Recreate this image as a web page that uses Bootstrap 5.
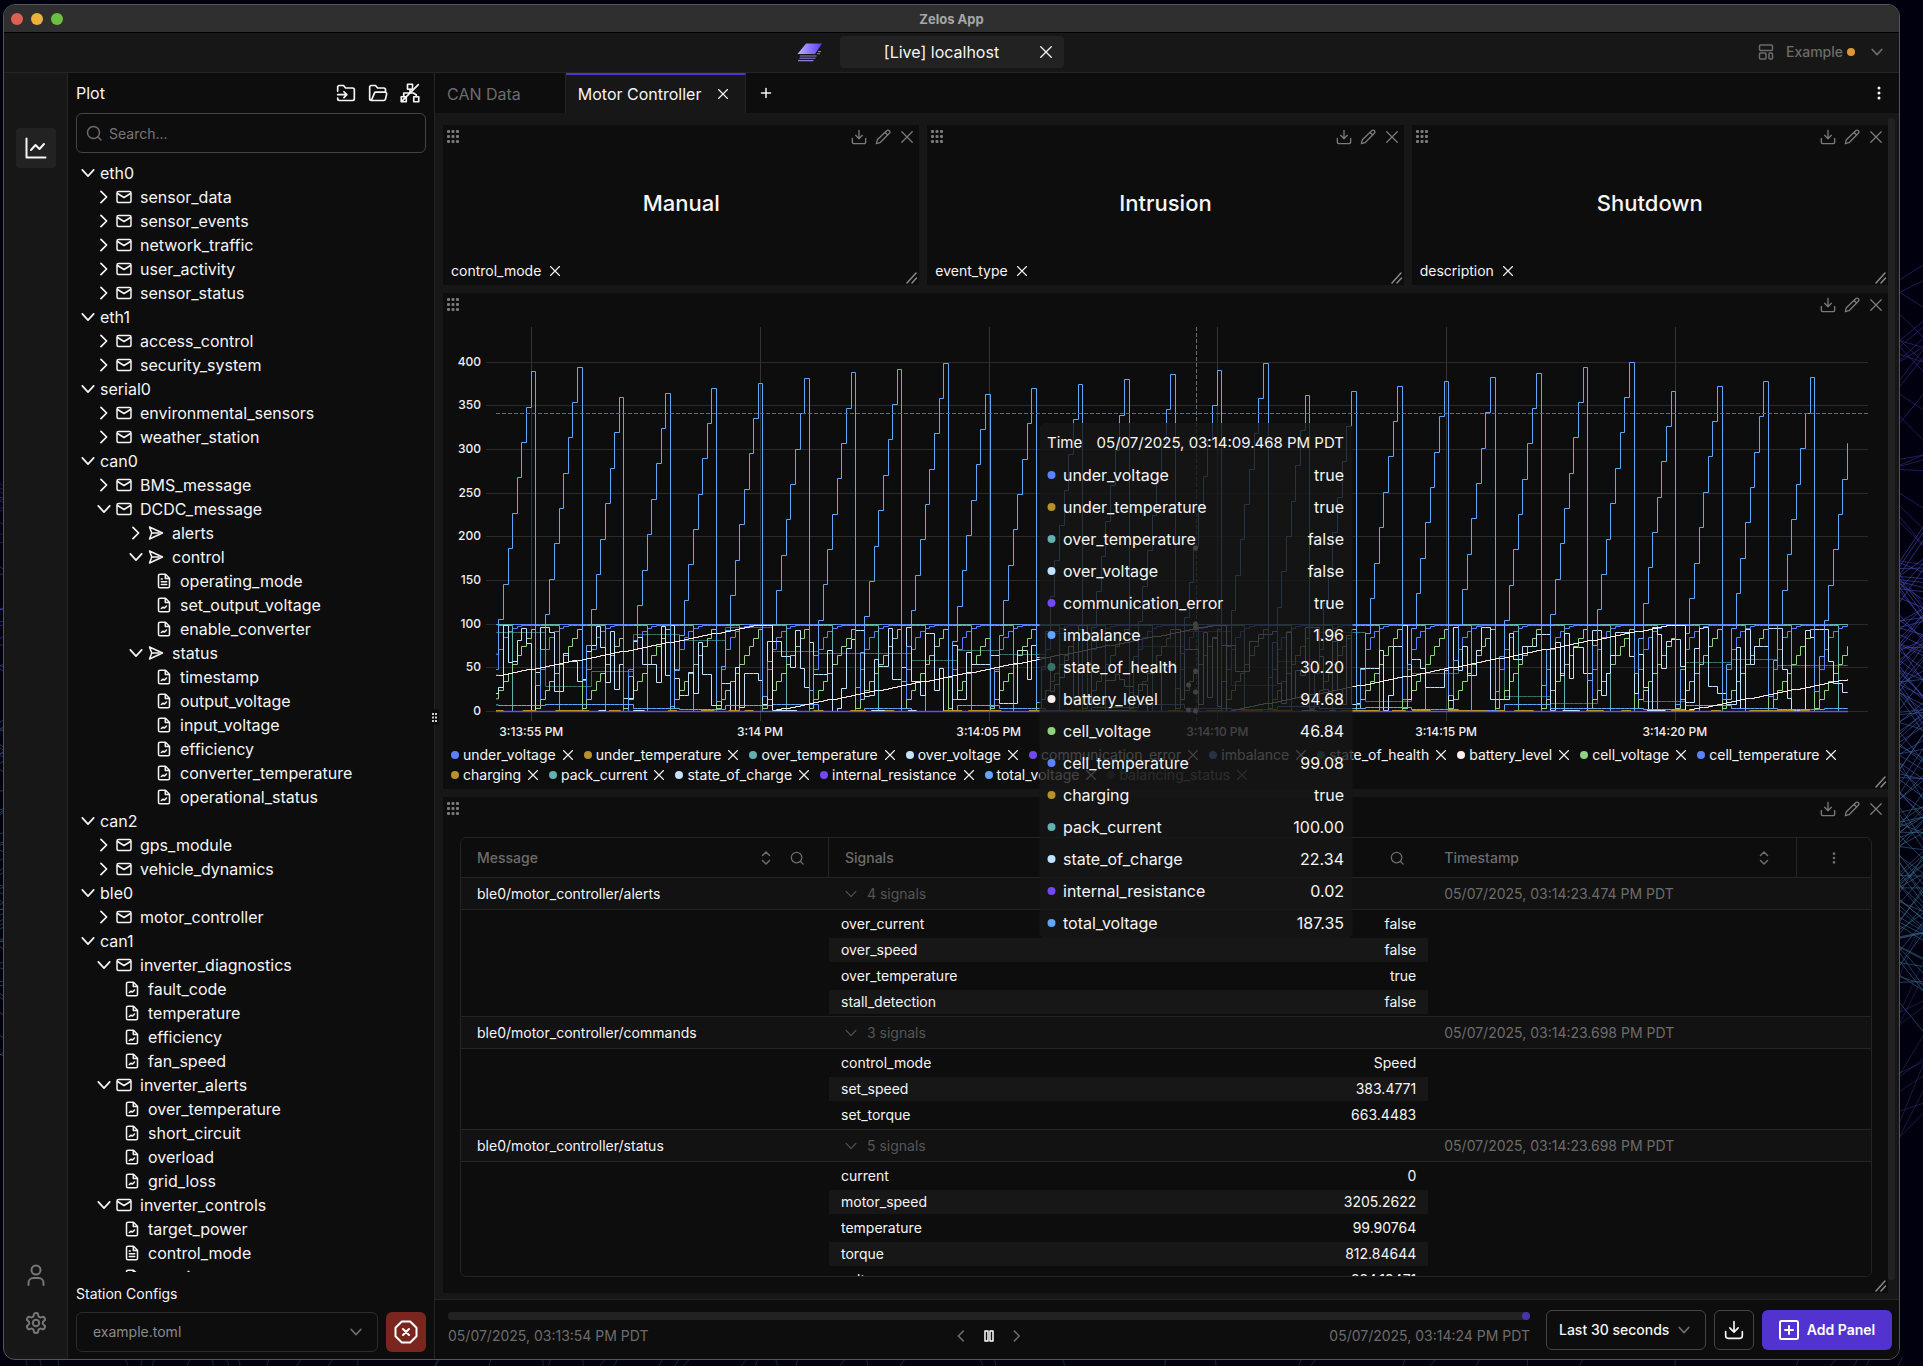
<!DOCTYPE html>
<html lang="en" data-bs-theme="dark">
<head>
<meta charset="utf-8">
<meta name="viewport" content="width=device-width, initial-scale=1">
<title>Zelos App</title>
<link rel="stylesheet" href="https://cdn.jsdelivr.net/npm/bootstrap@5.3.0/dist/css/bootstrap.min.css">
<style>
:root { --ink:#f5f5f5; --muted:#6c6c6c; --line:#242424; --surface:#0d0d0d; --frame:#171717; --raised:#222; --accent:#5233cf; }
body { background:#00000f; color:var(--ink); font-family:Inter,"Liberation Sans",sans-serif; font-size:16px; line-height:24px; height:100vh; padding:4px 23px 6px 3px; overflow:hidden; }
svg.ico { fill:none; stroke:currentColor; stroke-width:2; stroke-linecap:round; stroke-linejoin:round; display:block; flex:none; }
.i12 { width:12px; height:12px; } .i14 { width:14px; height:14px; } .i16 { width:16px; height:16px; } .i18 { width:18px; height:18px; } .i20 { width:20px; height:20px; } .i24 { width:24px; height:24px; }
svg.thin { stroke-width:1.5; }
.t14 { font-size:14px; }
.icon-btn { background:none; border:0; padding:0; color:inherit; display:flex; align-items:center; justify-content:center; }
.dim { color:var(--muted); }
.backdrop-net { position:fixed; inset:0; width:100%; height:100%; z-index:-1; }
.app-window { border:1px solid #555; border-radius:12px; background:var(--frame); }
.title-strip { height:28px; background:#2f2f2f; border-bottom:1px solid #000; display:grid; grid-template-columns:1fr auto 1fr; align-items:center; padding:0 7px; }
.title-strip h1 { font-size:13px; line-height:20px; font-weight:700; color:#a6a6a6; }
.light { width:12px; height:12px; border-radius:50%; }
.top-strip { height:40px; padding-bottom:1px; border-bottom:1px solid var(--line); display:grid; grid-template-columns:1fr 224px 1fr; align-items:center; }
.session-tab { height:32px; background:var(--raised); border-radius:4px; display:grid; grid-template-columns:16px 1fr 36px; align-items:center; text-align:center; }
.rail { width:64px; flex:none; border-right:1px solid var(--line); padding:55px 0 16px; }
.rail .icon-btn { width:40px; height:40px; border-radius:4px; color:#777; }
.rail .icon-btn.current { background:var(--raised); color:var(--ink); }
.side { width:367px; background:var(--surface); border-right:1px solid var(--line); padding:0 8px 7px; }
.side-head { height:40px; }
.field { height:40px; border-radius:6px; border:1px solid #444; background:transparent; color:var(--ink); font-size:14px; width:100%; }
.search-field { padding:0 12px 0 32px; }
.search-field::placeholder { color:#777; opacity:1; }
.over-left { position:absolute; left:10px; top:12px; pointer-events:none; }
.over-right { position:absolute; right:16px; top:14px; pointer-events:none; }
.pick { appearance:none; padding:0 16px; }
.pick.soft { border-color:#2b2b2b; color:#8a8a8a; }
.pick.range { width:160px; padding:0 12px; }
.stop-btn { width:40px; height:40px; background:#7a251e; border-radius:6px; color:#fff; }
.tree { flex:1 1 0; min-height:0; overflow:hidden; margin-top:8px; }
.tree ul { list-style:none; margin:0; padding:0; }
.tree li { height:24px; display:flex; align-items:center; white-space:nowrap; }
.tree .lv1 { padding-left:16px; } .tree .lv2 { padding-left:48px; } .tree .lv3 { padding-left:80px; }
.twist { width:24px; display:flex; justify-content:center; }
.tree .name { margin-left:8px; } .tree .lv0 .name { margin-left:0; }
.station-label { height:40px; padding-top:10px; line-height:24px; font-size:14px; }
.grip { position:absolute; right:-5px; top:636px; width:9px; height:16px; background:var(--surface); color:#ccc; z-index:2; }
.tabs { height:40px; background:var(--surface); }
.page-tab { height:40px; padding:0 12px; border:0; border-right:1px solid var(--line); background:none; color:var(--muted); display:flex; align-items:center; gap:12px; border-top:2px solid transparent; }
.page-tab.current { background:var(--frame); color:var(--ink); border-top-color:var(--accent); }
.slot { width:20px; display:flex; justify-content:center; }
.deck { padding:12px 4px 6px 8px; min-height:0; }
.scroll-rail { width:7px; margin:-7px 0 13px; background:var(--raised); border-radius:4px; flex:none; }
.panel { background:var(--surface); position:relative; min-height:0; min-width:0; }
.panel-head { height:24px; color:#7a7a7a; padding-left:3px; flex:none; }
.panel-head .icon-btn { width:24px; height:24px; } .panel-head .drag { width:14px; }
.stat-row { height:160px; gap:8px; }
.stat-value { font-size:22px; line-height:32px; font-weight:500; }
.stat-foot { height:28px; padding:0 8px; font-size:14px; flex:none; }
.resize { position:absolute; right:1px; bottom:1px; color:#888; }
.plot { display:block; width:100%; height:428px; flex:none; }
.plot text { fill:#f0f0f0; font-size:12px; font-weight:500; }
.keys { padding:0 8px; font-size:14px; line-height:20px; }
.key-item { display:flex; align-items:center; height:20px; margin-right:8px; }
.dot { width:8px; height:8px; border-radius:50%; flex:none; }
.key-item .dot { margin-right:4px; }
.key-item .icon-btn { width:16px; margin-left:4px; }
.key-item.off { opacity:.5; }
.hover-card { position:absolute; top:130px; width:313px; transform:translateX(-50%); background:rgba(23,23,23,.8); border-radius:6px; padding:4px 8px 0; z-index:5; }
.hc-row { height:32px; display:flex; align-items:center; white-space:nowrap; }
.hc-row.hc-time { font-size:15px; }
.sheet-wrap { margin:16px 16px 16px 17px; border:1px solid var(--line); border-radius:6px; overflow:hidden; font-size:14px; line-height:20px; flex:1 1 0; min-height:0; }
.sheet { width:100%; table-layout:fixed; border-collapse:separate; border-spacing:0; }
.sheet > thead th { height:40px; padding:0 16px; color:var(--muted); font-weight:500; border-bottom:1px solid var(--line); }
.sheet .edge { border-right:1px solid var(--line); }
.sheet .grp > * { height:32px; padding:0 16px; background:#121212; border-bottom:1px solid var(--line); color:#555; font-weight:400; }
.sheet .grp > th { color:var(--ink); }
.sheet .grp > .stamp { color:var(--muted); }
.sheet .leafs > td { padding:0; border-bottom:1px solid var(--line); }
.signals { width:100%; border-collapse:separate; border-spacing:0 2px; }
.signals th, .signals td { height:24px; padding:0 12px; font-weight:400; }
.signals td { text-align:right; }
.signals tr:nth-child(even) > * { background:var(--frame); }
.foot { height:60px; border-top:1px solid var(--line); background:var(--surface); padding:0 7px 0 13px; gap:8px; flex:none; }
.scrub { appearance:none; display:block; width:100%; height:8px; border-radius:4px; background:var(--raised); margin:0; }
.scrub::-webkit-slider-thumb { appearance:none; width:8px; height:8px; border-radius:50%; background:#4a32a8; }
.scrub-dates { display:grid; grid-template-columns:1fr auto 1fr; height:24px; margin-top:4px; align-items:center; font-size:14px; }
.scrub-area { padding-top:1px; }
.export-btn { width:40px; height:40px; border:1px solid #444; border-radius:6px; }
.add-btn { width:130px; height:40px; background:var(--accent); border:0; border-radius:6px; color:#fff; font-size:14px; font-weight:600; padding:0; }
</style>
<script src="https://cdn.jsdelivr.net/npm/bootstrap@5.3.0/dist/js/bootstrap.bundle.min.js"></script>
</head>
<body>
<svg class="d-none" aria-hidden="true">
  <symbol id="down" viewBox="0 0 16 16"><path d="M1.500 4.500 8 11.500l6.500-7"/></symbol>
  <symbol id="right" viewBox="0 0 16 16"><path d="M4.500 1.500 11 8l-6.500 6.500"/></symbol>
  <symbol id="left" viewBox="0 0 16 16"><path d="M11 1.500 4.500 8l6.500 6.500"/></symbol>
  <symbol id="x" viewBox="0 0 16 16"><path d="M2 2l12 12M14 2 2 14"/></symbol>
  <symbol id="plus" viewBox="0 0 16 16"><path d="M8 2v12M2 8h12"/></symbol>
  <symbol id="mail" viewBox="0 0 16 16"><rect x="1" y="2.500" width="14" height="11" rx="1.500"/><path d="M1.500 4.500 8 8.500l6.500-4"/></symbol>
  <symbol id="send" viewBox="0 0 16 16"><path d="M1.500 2 14.500 8 1.500 14 3.800 8zM3.800 8h7"/></symbol>
  <symbol id="doc" viewBox="0 0 16 16"><path d="M9.500 1.200H4A1.500 1.500 0 0 0 2.500 2.700v10.600A1.500 1.500 0 0 0 4 14.800h8a1.500 1.500 0 0 0 1.500-1.500V5.200zM9.300 1.400v4h4M5.300 11.500l1.700-1.300 1.500.8 2-2"/></symbol>
  <symbol id="doctext" viewBox="0 0 16 16"><path d="M9.500 1.200H4A1.500 1.500 0 0 0 2.500 2.700v10.600A1.500 1.500 0 0 0 4 14.800h8a1.500 1.500 0 0 0 1.500-1.500V5.200zM9.300 1.400v4h4M5.300 6h1M5.300 8.800h5.400M5.300 11.600h5.400"/></symbol>
  <symbol id="search" viewBox="0 0 16 16"><circle cx="7.500" cy="7.500" r="6"/><path d="m12 12 3 3"/></symbol>
  <symbol id="export" viewBox="0 0 24 24"><path d="M12 2v12M7 9.500l5 5 5-5M2 14v5a3 3 0 0 0 3 3h14a3 3 0 0 0 3-3v-5"/></symbol>
  <symbol id="pen" viewBox="0 0 24 24"><path d="M2 22l1.500-6L17.500 2.500a2.800 2.800 0 0 1 4 4L7.500 20.500zM15 5l4 4"/></symbol>
  <symbol id="dots9" viewBox="0 0 12 14"><g fill="currentColor" stroke="none"><rect x="0" y="0" width="3" height="3" rx="1"/><rect x="4.500" y="0" width="3" height="3" rx="1"/><rect x="9" y="0" width="3" height="3" rx="1"/><rect x="0" y="5" width="3" height="3" rx="1"/><rect x="4.500" y="5" width="3" height="3" rx="1"/><rect x="9" y="5" width="3" height="3" rx="1"/><rect x="0" y="10" width="3" height="3" rx="1"/><rect x="4.500" y="10" width="3" height="3" rx="1"/><rect x="9" y="10" width="3" height="3" rx="1"/></g></symbol>
  <symbol id="kebab" viewBox="0 0 16 16"><g fill="currentColor" stroke="none"><circle cx="8" cy="3" r="1.500"/><circle cx="8" cy="8" r="1.500"/><circle cx="8" cy="13" r="1.500"/></g></symbol>
  <symbol id="corner" viewBox="0 0 12 12"><path d="M1 11 10 1M6 11l4.500-5"/></symbol>
  <symbol id="sort" viewBox="0 0 16 16"><path d="M4.500 5.500 8 2l3.500 3.500M4.500 10.500 8 14l3.500-3.500"/></symbol>
</svg>
<svg class="backdrop-net" id="net" aria-hidden="true"></svg>

<div class="app-window d-flex flex-column h-100 overflow-hidden">
  <header>
    <div class="title-strip">
      <div class="d-flex gap-2"><span class="light" style="background:#dd6055"></span><span class="light" style="background:#ecb13c"></span><span class="light" style="background:#6cbf43"></span></div>
      <h1 class="m-0">Zelos App</h1><span></span>
    </div>
    <div class="top-strip">
      <div class="d-flex justify-content-end pe-3">
        <svg width="28" height="20" viewBox="0 0 28 20" aria-label="Zelos"><defs><linearGradient id="lg" x1="0" x2="1"><stop offset="0" stop-color="#c0b2ff"/><stop offset="1" stop-color="#5a3cf0"/></linearGradient></defs><path fill="url(#lg)" d="M10 1.500h16L19 12H1.500z"/><path fill="none" stroke="#8f80d8" stroke-width="1.100" d="M4 14h16.500M3.500 16.300h16M2 18.600h15.500M21 11.800h3M22 9.500h3"/></svg>
      </div>
      <div class="session-tab"><span></span><span>[Live] localhost</span><button class="icon-btn" aria-label="Close session"><svg class="ico thin i14"><use href="#x"/></svg></button></div>
      <div class="d-flex justify-content-end">
        <button class="icon-btn dim t14 fw-medium pe-3">
          <svg class="ico thin i16 me-2" viewBox="0 0 16 16"><rect x="1.500" y="1" width="13" height="5.500" rx="1"/><rect x="1.500" y="9" width="6.500" height="6" rx="1"/><rect x="11" y="9" width="3.500" height="6" rx="1"/></svg>
          <span class="ms-1">Example</span><span class="dot ms-1 me-3" style="background:#e0972f"></span><svg class="ico i12"><use href="#down"/></svg>
        </button>
      </div>
    </div>
  </header>

  <div class="d-flex flex-grow-1" style="min-height:0">
    <nav class="rail d-flex flex-column align-items-center" aria-label="Sections">
      <button class="icon-btn current" aria-label="Plot"><svg class="ico i24" viewBox="0 0 24 24"><path d="M2.500 2.500v19h19M7 14l4.500-5 4 4L20 8"/></svg></button>
      <button class="icon-btn mt-auto" aria-label="Account"><svg class="ico i24" viewBox="0 0 24 24"><circle cx="12" cy="7" r="4.500"/><path d="M4.500 22v-2a5 5 0 0 1 5-5h5a5 5 0 0 1 5 5v2"/></svg></button>
      <button class="icon-btn mt-2" aria-label="Settings"><svg class="ico i24" viewBox="0 0 24 24"><circle cx="12" cy="12" r="3.200"/><path d="M12.200 2h-.4a2 2 0 0 0-2 2v.2a2 2 0 0 1-1 1.700l-.4.300a2 2 0 0 1-2 0l-.2-.1a2 2 0 0 0-2.700.7l-.2.400a2 2 0 0 0 .7 2.700l.2.100a2 2 0 0 1 1 1.700v.5a2 2 0 0 1-1 1.800l-.2.100a2 2 0 0 0-.7 2.700l.2.400a2 2 0 0 0 2.700.7l.2-.1a2 2 0 0 1 2 0l.4.300a2 2 0 0 1 1 1.700v.2a2 2 0 0 0 2 2h.4a2 2 0 0 0 2-2v-.2a2 2 0 0 1 1-1.700l.4-.3a2 2 0 0 1 2 0l.2.100a2 2 0 0 0 2.700-.7l.2-.4a2 2 0 0 0-.7-2.700l-.2-.1a2 2 0 0 1-1-1.800v-.5a2 2 0 0 1 1-1.700l.2-.1a2 2 0 0 0 .7-2.700l-.2-.4a2 2 0 0 0-2.700-.7l-.2.100a2 2 0 0 1-2 0l-.4-.3a2 2 0 0 1-1-1.700V4a2 2 0 0 0-2-2z"/></svg></button>
    </nav>

    <aside class="side d-flex flex-column position-relative flex-shrink-0">
      <div class="side-head d-flex align-items-center">
        <span class="me-auto">Plot</span>
        <div class="d-flex gap-2 me-1">
          <button class="icon-btn i24" aria-label="Import"><svg class="ico i20" viewBox="0 0 24 24"><path d="M2 10V5a2 2 0 0 1 2-2h5l2.500 3H20a2 2 0 0 1 2 2v11a2 2 0 0 1-2 2H4a2 2 0 0 1-2-2v-1M2 14h11M9.500 10.500 13 14l-3.500 3.500"/></svg></button>
          <button class="icon-btn i24" aria-label="Open"><svg class="ico i20" viewBox="0 0 24 24"><path d="M4 21a2 2 0 0 1-2-2V5a2 2 0 0 1 2-2h5l2.500 3H19a2 2 0 0 1 2 2v3M4 21h15a2 2 0 0 0 1.900-1.400l1.500-6.500A2 2 0 0 0 20.500 11H9.500a2 2 0 0 0-1.800 1.100z"/></svg></button>
          <button class="icon-btn i24" aria-label="Disconnect"><svg class="ico i20" viewBox="0 0 24 24"><rect x="9" y="1.500" width="6" height="6"/><rect x="1.500" y="16.500" width="6" height="6"/><rect x="16.500" y="16.500" width="6" height="6"/><path d="M12 7.500V12M4.500 16.500V12H16l3.500 2v2.500M22 2 2 22"/></svg></button>
        </div>
      </div>
      <div class="position-relative">
        <input class="field search-field" type="text" aria-label="Search signals" placeholder="Search...">
        <span class="over-left dim"><svg class="ico thin i16"><use href="#search"/></svg></span>
      </div>
      <div class="tree"><ul id="tree"></ul></div>
      <label class="station-label" for="station">Station Configs</label>
      <div class="d-flex gap-2">
        <div class="position-relative flex-grow-1">
          <select class="field pick soft" id="station"><option>example.toml</option></select>
          <span class="over-right dim"><svg class="ico i12"><use href="#down"/></svg></span>
        </div>
        <button class="icon-btn stop-btn" aria-label="Stop station"><svg class="ico i24" viewBox="0 0 24 24"><path d="M7.800 1.500h8.400l6.300 6.300v8.400l-6.300 6.300H7.800l-6.300-6.300V7.800zM9 9l6 6M15 9l-6 6"/></svg></button>
      </div>
      <span class="grip d-flex align-items-center justify-content-center"><svg width="5" height="9" viewBox="0 0 5 9" fill="currentColor"><path d="M0 0h2v2H0zM3 0h2v2H3zM0 3.500h2v2H0zM3 3.500h2v2H3zM0 7h2v2H0zM3 7h2v2H3z"/></svg></span>
    </aside>

    <main class="d-flex flex-column flex-grow-1" style="min-width:0">
      <div class="tabs d-flex align-items-center flex-shrink-0">
        <button class="page-tab">CAN Data<span class="slot"></span></button>
        <button class="page-tab current">Motor Controller<span class="slot"><svg class="ico thin i12"><use href="#x"/></svg></span></button>
        <button class="icon-btn ms-2 i24" aria-label="Add tab"><svg class="ico i12"><use href="#plus"/></svg></button>
        <button class="icon-btn ms-auto me-2 i24" aria-label="Tab menu"><svg class="ico i16"><use href="#kebab"/></svg></button>
      </div>

      <div class="deck d-flex flex-grow-1">
        <div class="d-flex flex-column flex-grow-1 gap-2" style="min-width:0">
          <div class="stat-row d-flex flex-shrink-0" id="stats"></div>

          <section class="panel d-flex flex-column" style="flex:1 1 0">
            <div class="panel-head d-flex align-items-center" data-head></div>
            <svg class="plot" id="plot" role="img" aria-label="Signal plot"></svg>
            <div class="keys d-flex flex-wrap" id="keys"></div>
            <div class="hover-card" id="card"></div>
            <svg class="ico resize thin i12"><use href="#corner"/></svg>
          </section>

          <section class="panel d-flex flex-column" style="flex:1 1 0">
            <div class="panel-head d-flex align-items-center" data-head></div>
            <div class="sheet-wrap">
              <table class="sheet">
                <colgroup><col style="width:26.1%"><col style="width:42.5%"><col><col style="width:74px"></colgroup>
                <thead><tr>
                  <th class="edge" scope="col"><div class="d-flex align-items-center"><span class="me-auto">Message</span><svg class="ico thin i16 me-3"><use href="#sort"/></svg><svg class="ico thin i14 me-2"><use href="#search"/></svg></div></th>
                  <th scope="col"><div class="d-flex align-items-center"><span class="me-auto">Signals</span><svg class="ico thin i14 me-2"><use href="#search"/></svg></div></th>
                  <th class="edge" scope="col"><div class="d-flex align-items-center"><span class="me-auto">Timestamp</span><svg class="ico thin i16 me-2"><use href="#sort"/></svg></div></th>
                  <th scope="col"><svg class="ico i14 mx-auto"><use href="#kebab"/></svg></th>
                </tr></thead>
                <tbody id="sheet"></tbody>
              </table>
            </div>
            <svg class="ico resize thin i12"><use href="#corner"/></svg>
          </section>
        </div>
        <div class="scroll-rail"></div>
      </div>

      <footer class="foot d-flex align-items-center">
        <div class="scrub-area flex-grow-1 me-2">
          <input class="scrub" type="range" aria-label="Time position" min="0" max="100" value="100">
          <div class="scrub-dates dim">
            <span>05/07/2025, 03:13:54 PM PDT</span>
            <div class="d-flex gap-3">
              <button class="icon-btn" aria-label="Step back"><svg class="ico i12"><use href="#left"/></svg></button>
              <button class="icon-btn text-white" aria-label="Pause"><svg class="ico thin i12" viewBox="0 0 12 12"><rect x="2" y="1" width="3" height="10"/><rect x="7" y="1" width="3" height="10"/></svg></button>
              <button class="icon-btn" aria-label="Step forward"><svg class="ico i12"><use href="#right"/></svg></button>
            </div>
            <span class="text-end">05/07/2025, 03:14:24 PM PDT</span>
          </div>
        </div>
        <div class="position-relative">
          <select class="field pick range fw-medium" aria-label="Time range"><option>Last 30 seconds</option></select>
          <span class="over-right dim"><svg class="ico i12"><use href="#down"/></svg></span>
        </div>
        <button class="icon-btn export-btn" aria-label="Export"><svg class="ico i20"><use href="#export"/></svg></button>
        <button class="add-btn d-flex align-items-center justify-content-center gap-2"><svg class="ico i20" viewBox="0 0 20 20"><rect x="1" y="1" width="18" height="18" rx="1.500"/><path d="M10 6v8M6 10h8"/></svg>Add Panel</button>
      </footer>
    </main>
  </div>
</div>

<script>
const $ = id => document.getElementById(id);
const ico = (n, c) => `<svg class="ico ${c}"><use href="#${n}"/></svg>`;
let seed = 7;
const rnd = () => (seed = (seed * 16807) % 2147483647) / 2147483647;

/* Signal tree: level, kind, name. v = open, > = closed, f = signal, t = enum signal */
const rows = `0v eth0|1> sensor_data|1> sensor_events|1> network_traffic|1> user_activity|1> sensor_status|0v eth1|1> access_control|1> security_system|0v serial0|1> environmental_sensors|1> weather_station|0v can0|1> BMS_message|1v DCDC_message|2> alerts|2v control|3t operating_mode|3f set_output_voltage|3f enable_converter|2v status|3f timestamp|3f output_voltage|3f input_voltage|3f efficiency|3f converter_temperature|3f operational_status|0v can2|1> gps_module|1> vehicle_dynamics|0v ble0|1> motor_controller|0v can1|1v inverter_diagnostics|2f fault_code|2f temperature|2f efficiency|2f fan_speed|1v inverter_alerts|2f over_temperature|2f short_circuit|2f overload|2f grid_loss|1v inverter_controls|2f target_power|2t control_mode|2f reactive_power`.split('|');
$('tree').innerHTML = rows.map(r => {
  const lv = r[0], k = r[1], name = r.slice(3);
  let s = '';
  if (k === 'v' || k === '>') s += `<span class="twist">${ico(k === 'v' ? 'down' : 'right', 'i14')}</span>`;
  if (k === 'f') s += ico('doc', 'thin i16');
  if (k === 't') s += ico('doctext', 'thin i16');
  if ((k === 'v' || k === '>') && lv === '1') s += ico('mail', 'thin i16');
  if ((k === 'v' || k === '>') && lv === '2') s += ico('send', 'thin i16');
  return `<li class="lv${lv}">${s}<span class="name">${name}</span></li>`;
}).join('');

$('stats').innerHTML = [['Manual', 'control_mode'], ['Intrusion', 'event_type'], ['Shutdown', 'description']].map(([v, n]) =>
  `<section class="panel d-flex flex-column" style="flex:1 1 0"><div class="panel-head d-flex align-items-center" data-head></div>
   <div class="stat-value flex-grow-1 d-flex align-items-center justify-content-center">${v}</div>
   <div class="stat-foot d-flex align-items-center gap-2">${n}<button class="icon-btn" aria-label="Remove ${n}">${ico('x', 'thin i12')}</button></div>
   ${ico('corner', 'resize thin i12')}</section>`).join('');
document.querySelectorAll('[data-head]').forEach(h => h.innerHTML =
  `<button class="icon-btn drag me-auto" aria-label="Move panel">${ico('dots9', 'i14')}</button><button class="icon-btn" aria-label="Download">${ico('export', 'i16')}</button><button class="icon-btn" aria-label="Edit">${ico('pen', 'i16')}</button><button class="icon-btn" aria-label="Close">${ico('x', 'thin i14')}</button>`);

const C = { uv:'#5a82ff', gold:'#b8912a', teal:'#62b0b0', light:'#c3e2ff', violet:'#7447f5', blue:'#62a6fb', moss:'#3a7068', pale:'#fdeeee', green:'#90d282' };
const sig = [['under_voltage',C.uv,'true'],['under_temperature',C.gold,'true'],['over_temperature',C.teal,'false'],['over_voltage',C.light,'false'],['communication_error',C.violet,'true'],['imbalance',C.blue,'1.96'],['state_of_health',C.moss,'30.20'],['battery_level',C.pale,'94.68'],['cell_voltage',C.green,'46.84'],['cell_temperature',C.uv,'99.08'],['charging',C.gold,'true'],['pack_current',C.teal,'100.00'],['state_of_charge',C.light,'22.34'],['internal_resistance',C.violet,'0.02'],['total_voltage',C.blue,'187.35']];
$('keys').innerHTML = sig.concat([['balancing_status', C.moss]]).map(([n, c], i) =>
  `<span class="key-item${i === 15 ? ' off' : ''}"><span class="dot" style="background:${c}"></span>${n}<button class="icon-btn" aria-label="Remove ${n}">${ico('x', 'thin i12')}</button></span>`).join('');
$('card').innerHTML = `<div class="hc-row hc-time justify-content-between"><span>Time</span><span>05/07/2025, 03:14:09.468 PM PDT</span></div>` +
  sig.map(([n, c, v]) => `<div class="hc-row"><span class="dot me-2" style="background:${c}"></span><span class="me-auto">${n}</span><span>${v}</span></div>`).join('');

const groups = [
  ['ble0/motor_controller/alerts', '4 signals', '05/07/2025, 03:14:23.474 PM PDT', [['over_current','false'],['over_speed','false'],['over_temperature','true'],['stall_detection','false']]],
  ['ble0/motor_controller/commands', '3 signals', '05/07/2025, 03:14:23.698 PM PDT', [['control_mode','Speed'],['set_speed','383.4771'],['set_torque','663.4483']]],
  ['ble0/motor_controller/status', '5 signals', '05/07/2025, 03:14:23.698 PM PDT', [['current','0'],['motor_speed','3205.2622'],['temperature','99.90764'],['torque','812.84644'],['voltage','224.19471']]]];
$('sheet').innerHTML = groups.map(([m, n, t, s]) =>
  `<tr class="grp"><th scope="row">${m}</th><td><span class="d-flex align-items-center gap-2"><span class="i14 d-flex align-items-center">${ico('down', 'thin i12')}</span>${n}</span></td><td class="stamp" colspan="2">${t}</td></tr>
   <tr class="leafs"><td></td><td><table class="signals"><tbody>${s.map(([a, b]) => `<tr><th scope="row">${a}</th><td>${b}</td></tr>`).join('')}</tbody></table></td><td colspan="2"></td></tr>`).join('');

function drawPlot() {
  seed = 4242;
  const svg = $('plot'), W = svg.clientWidth, x0 = 53, x1 = W - 40, u = (x1 - x0) / 1352;
  const X = v => x0 + (v - 53) * u, Y = v => 394 - v * 0.8731;
  let s = '';
  const cx = v => Math.round(v) + .5;
  for (let v = 0; v <= 400; v += 50) {
    s += `<path d="M43 ${cx(Y(v))}H${W - 20}" stroke="#2a2a2a"/><text x="38" y="${Math.round(Y(v)) + 4}" text-anchor="end">${v}</text>`;
  }
  ['3:13:55 PM','3:14 PM','3:14:05 PM','3:14:10 PM','3:14:15 PM','3:14:20 PM'].forEach((t, i) => {
    const x = X(88.3 + i * 228.7);
    s += `<path d="M${cx(x)} 10V404" stroke="#333"/><text x="${x}" y="419" text-anchor="middle">${t}</text>`;
  });
  /* every series advances by one sample each 4.634 units and restarts with the total_voltage ramp */
  const peaks = [389,394.5,359.5,364.5,370.5,376,381.5,388,392,399,363.5,370,375,380,386.5,391,399,362.5,367,372.5,378,382.5,387.5,394.5,400,367,372.5,378,382,387.5];
  const st = 4.634, series = { total:[], temp:[], cell:[], soc:[], soh:[], pack:[], imb:[], bat:[] };
  let x = 92.4 - 9 * st, soc = 20;
  const soh = [90,29,46,88,81,96,69,66,66,58,70,65,89,89,75,92,30,57,90,12,44,98,17,9,98,11,56,59,53,53];
  const imb = [7,8,8,4,2,7,8,0,4,0,7,3,1,5,8,4,2,6,3,5,2,1,8,4,4,2,7,3,2,4];
  peaks.forEach((p, c) => {
    const n = c === 0 ? 9 : (p < peaks[c - 1] ? 9 : 10);
    for (let k = 0; k < n; k++, x += st) {
      if (x > 1405) break;
      const px = Math.max(x, 53), q = c === 0 ? k + 1 : k;
      series.total.push([px, p - (n - 1 - k) * 40.5]);
      series.temp.push([px, 99.2 - 96 * Math.exp(-q * .62)]);
      series.cell.push([px, 4 + q * 10]);
      if (rnd() > .3) soc = rnd() * 99;
      series.soc.push([px, soc]);
      series.soh.push([px, soh[Math.max(0, q > 1 ? c : c - 1)]]);
      series.imb.push([px, imb[Math.max(0, q > 1 ? c : c - 1)]]);
      series.pack.push([px, q < 5 ? 99 : 0]);
      const b = (px - 325 + 912) % 456;
      series.bat.push([px, Math.min(99, b * .2224)]);
    }
  });
  const step = a => { let d = `M${X(a[0][0]).toFixed(1)} ${Y(a[0][1]).toFixed(1)}`; for (let i = 1; i < a.length; i++) d += `H${Math.round(X(a[i][0])) + .5}V${Math.round(Y(a[i][1])) + .5}`; return d + `H${x1}`; };
  const add = (a, c) => s += `<path d="${step(a)}" fill="none" stroke="${c}" stroke-width="1"/>`;
  add(series.soh, C.moss); add(series.temp, C.uv); add(series.pack, C.teal);
  s += `<path d="M${x0} ${cx(Y(99.5))}H${x1}" stroke="${C.uv}"/>`;
  for (let a = 53; a < 1405; a += 46) s += `<path d="M${X(a)} ${cx(Y(99.5))}H${Math.min(x1, X(a + 18))}" stroke="${C.teal}"/>`;
  add(series.cell, C.green); add(series.soc, C.light); add(series.imb, C.blue); add(series.total, C.blue); add(series.bat, C.pale);
  s += `<path d="M${x0} 394.500H${x1}" stroke="${C.violet}" stroke-width="1.500"/>`;
  for (let a = 53; a < 1380; a += 10 + rnd() * 30) s += `<path d="M${X(a)} 393.500h${(6 + rnd() * 18) * u}" stroke="${rnd() > .2 ? C.gold : C.light}"/>`;
  const hx = X(752.5);
  s += `<path d="M${x0} 96.500H${W - 20}M${cx(hx)} 10V404" stroke="#5f6b75" stroke-dasharray="4 2" fill="none"/>`;
  [[0,231],[0,307],[0,311],[0,354],[-7,368],[0,375],[-7,393],[0,394]].forEach(([a, b]) => s += `<circle cx="${hx + a}" cy="${b}" r="2.500" fill="#eee"/>`);
  svg.innerHTML = s;
  $('card').style.left = hx + 'px';
}
drawPlot();
addEventListener('resize', drawPlot);

/* wireframe mesh on the desktop behind the window */
(function () {
  const W = innerWidth, H = innerHeight; let s = '';
  const seg = (x, y, w, h, c, o) => s += `<path d="M${x.toFixed(1)} ${y.toFixed(1)}l${w.toFixed(1)} ${h.toFixed(1)}" stroke="${c}" opacity="${o}" fill="none"/>`;
  const tint = y => y < 560 ? '#4233a0' : y < 680 ? '#4a56c8' : y < 800 ? '#4068a8' : '#3b7396';
  for (let i = 0; i < 26; i++) { const y = 265 + rnd() * 290; seg(W - 45, y, 60, (rnd() - .5) * 160, tint(y), .5); }
  for (let i = 0; i < 150; i++) { const y = 555 + Math.pow(rnd(), 1.1) * 440; seg(W - 30, y, 34, (rnd() - .5) * 110, tint(y), .55); }
  for (let i = 0; i < 14; i++) { const y = 990 + rnd() * 190; seg(W - 45, y, 60, -rnd() * 150, '#2c3570', .5); }
  for (let i = 0; i < 70; i++) { const y = 480 + rnd() * 600; seg(-4, y, 12, (rnd() - .5) * 20, tint(y), .5); }
  for (let i = 0; i < 50; i++) { seg(rnd() * W, H, (rnd() - .3) * 12, -9, '#2b4a63', .5); }
  $('net').innerHTML = s;
})();
</script>
</body>
</html>
